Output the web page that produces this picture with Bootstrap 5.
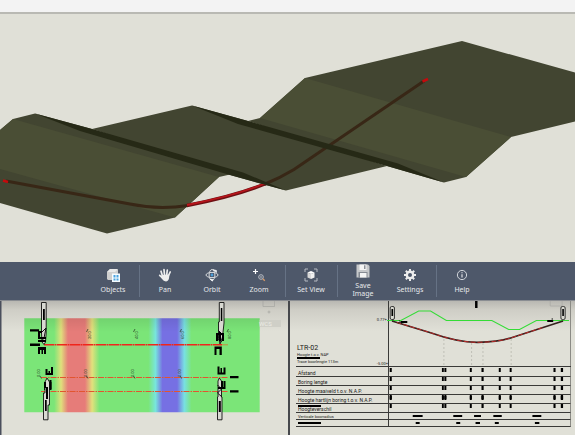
<!DOCTYPE html>
<html lang="nl">
<head>
<meta charset="utf-8">
<meta name="viewport" content="width=device-width, initial-scale=1">
<title>LTR-02 model viewer</title>
<link href="https://cdn.jsdelivr.net/npm/bootstrap@5.3.0/dist/css/bootstrap.min.css" rel="stylesheet">
<style>
  body { background: #e0e0d7; font-family: "Noto Sans", "Open Sans", sans-serif; }
  .title-strip { height: 14px; background: #f3f3f3; border-bottom: 2px solid #b9b9b3; }
  .model-view { min-height: 0; flex: 1 1 0; }
  .model-view svg { width: 100%; height: 100%; }
  .tool-strip { background: #4e586a; height: 39px; border-bottom: 1px solid #8a8d92; }
  .tool-btn { width: 47px; background: none; border: 0; padding: 0; color: #e6e8eb; font-size: 7px; line-height: 8px; gap: 4px; }
  .tool-btn:hover { background: #5c677b; }
  .tool-btn svg { width: 14px; height: 14px; }
  .tool-sep { width: 1px; margin: 3px 2px; background: #667285; }
  .sheets { display: grid; grid-template-columns: 58fr 57fr; }
  .sheet { background: linear-gradient(#b9b8b2, #cfcec6 9px, #e0e0d7 30px); }
  .plan-sheet { border-right: 2px solid #46484c; }
  .plan-sheet svg { width: 100%; }
  .profile-sheet { padding: 0 4px 8px 6px; color: #1a1a18; font-family: Roboto, "Liberation Sans", sans-serif; font-size: 5px; line-height: 5px; }
  .label-side { width: 92px; }
  .profile-head { height: 65px; }
  .profile-notes { padding: 0 0 2px 1px; }
  .profile-title { font-size: 7px; line-height: 8px; }
  .fine-print { font-size: 4px; line-height: 5px; }
  .graph { border-left: 1px solid #3a3a38; border-right: 1px solid #8b8b85; }
  .graph svg, .profile-table svg { width: 100%; height: 100%; overflow: visible; }
  .profile-table { width: 100%; table-layout: fixed; border-collapse: separate; border-spacing: 0; border-top: 1px solid #3a3a38; }
  .profile-table th, .profile-table td { height: 9px; padding: 0; border-bottom: 1px solid #3a3a38; font-weight: 400; vertical-align: bottom; }
  .profile-table th { padding-left: 2px; white-space: nowrap; }
  .profile-table td { border-left: 1px solid #3a3a38; border-right: 1px solid #8b8b85; }
  .profile-table .first-row > * { height: 10px; }
  .profile-table .low-row > * { height: 7px; }
  .cell-art { height: 8px; }
  .low-row .cell-art { height: 6px; }
  .redacted { width: 23px; height: 2px; background: #000; }
</style>
<script src="https://cdn.jsdelivr.net/npm/bootstrap@5.3.0/dist/js/bootstrap.bundle.min.js"></script>
</head>
<body class="d-flex flex-column vh-100 overflow-hidden">

<header class="title-strip flex-shrink-0"></header>

<main class="d-flex flex-column flex-grow-1">
  <section class="model-view" aria-label="3D model">
    <svg class="d-block" viewBox="0 14 575 248" preserveAspectRatio="xMidYMid slice" role="img" aria-label="Terrain with bore path">
      <!-- rear terrain fold -->
      <path fill="#424531" d="M248 121 260 118 305 78 462 41 575 72.500 680 102V96L575 121.500 511 137 466 177 444 182.500 387 166Z"/>
      <path fill="#4a4e35" d="M260 118 305 78 511 137 466 177Z"/>
      <!-- middle fold -->
      <path fill="#424531" d="M92 129 192 105.500 248 121 387 166 286 190.500 230 175Z"/>
      <!-- front fold -->
      <path fill="#424531" d="M-100 212 0 130 13 119 35 113.500 92 129 230 174.500 219 177 175 217.500 107 233.500 0 203Z"/>
      <path fill="#4a4e35" d="M-100 212 0 130 13 119 219 177 175 217.500 0 169Z"/>
      <!-- bore path -->
      <path fill="none" stroke="#382716" stroke-width="3" d="M6 181 130 204Q158 210 188 205.500M264 184.500Q280 178 294 169.500L424 81"/>
      <path fill="none" stroke="#6d1013" stroke-width="3.500" d="M187 205.500Q236 196 266 183.500"/>
      <path fill="none" stroke="#b8151b" stroke-width="1.800" d="M187 205Q236 195.500 266 183"/>
      <!-- shaded ridges -->
      <path fill="#262916" d="M35 113.500 92 129 243 172.500 286 190.500 230 175 80 131Z"/>
      <path fill="#262916" d="M192 105.500 248 121 398 163.500 444 182.500 387 166 238 124Z"/>
      <path stroke="#c40a0d" stroke-width="2.500" d="M3 180.500 8 182M422.500 81.500 428 79"/>
    </svg>
  </section>

  <nav class="tool-strip d-flex justify-content-center flex-shrink-0" aria-label="Viewer tools">
    <button type="button" class="tool-btn d-flex flex-column align-items-center justify-content-center">
      <svg viewBox="0 0 14 14"><path fill="#cfcfcf" d="M1 4 4 1H11L12 2V5L9 12H2L1 11Z"/><path fill="#e9e9e9" d="M1 4 4 1H12L9 4Z"/><path fill="#f5fbff" d="M6 5.500H14V14H6Z"/><path fill="#4aa3e0" d="M7.500 7H9.500V9.500H7.500ZM10.500 7H12.500V9.500H10.500ZM7.500 10.500H9.500V12.500H7.500ZM10.500 10.500H12.500V12.500H10.500Z"/></svg>
      <span>Objects</span>
    </button>
    <div class="tool-sep"></div>
    <button type="button" class="tool-btn d-flex flex-column align-items-center justify-content-center">
      <svg viewBox="0 0 14 14" fill="none" stroke="#ededed" stroke-width="1.700" stroke-linecap="round"><path d="M4.500 8 3 3.200M6.500 7 6 1.700M8.700 7 9.300 2M10.300 8 12.200 4M4.500 10 1.700 7.300"/><path fill="#ededed" stroke="none" d="M3.700 7 11.200 6.500C11.500 9.500 10.800 13.500 8 13.500 5.500 13.500 4.500 11.500 3.200 9.800Z"/></svg>
      <span>Pan</span>
    </button>
    <button type="button" class="tool-btn d-flex flex-column align-items-center justify-content-center">
      <svg viewBox="0 0 14 14" fill="none" stroke="#d5d8dc" stroke-width="1"><ellipse cx="7" cy="7" rx="6" ry="2.600"/><ellipse cx="7" cy="7" rx="2.900" ry="5.500"/><path fill="#fff" stroke="#fff" stroke-width=".5" d="M8 1.500 11.500 4.500 11.500 2.500ZM5 11 7.500 13.200 8 11.500Z"/><circle cx="7" cy="7" r="1.400" fill="#4b9dd8" stroke="none"/></svg>
      <span>Orbit</span>
    </button>
    <button type="button" class="tool-btn d-flex flex-column align-items-center justify-content-center">
      <svg viewBox="0 0 14 14" fill="none"><path stroke="#fff" stroke-width="1.200" d="M3.500 1V6M1 3.500H6"/><circle cx="9" cy="9" r="2.300" stroke="#b9bdc4"/><path stroke="#b9bdc4" d="M8 9H10"/><path stroke="#d59a68" stroke-width="1.300" d="M10.800 10.800 12.800 12.800"/></svg>
      <span>Zoom</span>
    </button>
    <div class="tool-sep"></div>
    <button type="button" class="tool-btn d-flex flex-column align-items-center justify-content-center">
      <svg viewBox="0 0 14 14"><path fill="none" stroke="#b5bac2" d="M1 4V1H4M10 1H13V4M13 10V13H10M4 13H1V10"/><path fill="#fff" d="M3.500 4.500 7 3 10.500 4.500 7 6Z"/><path fill="#d8d8d8" d="M3.500 4.500 7 6V11L3.500 9.500Z"/><path fill="#f0f0f0" d="M10.500 4.500 7 6V11L10.500 9.500Z"/></svg>
      <span>Set View</span>
    </button>
    <div class="tool-sep"></div>
    <button type="button" class="tool-btn d-flex flex-column align-items-center justify-content-center">
      <svg viewBox="0 0 14 14"><path fill="#c6c8ca" d="M.5.500H12L13.500 2V13.500H.500Z"/><path fill="#f4f4f4" d="M3.500.500H10.500V6H3.500Z"/><path fill="#8c9097" d="M8 1.200H9.500V5H8Z"/><path fill="#858a92" d="M2.500 8H11.500V13.500H2.500Z"/><path fill="#f4f4f4" d="M4 9H10.500V13.500H4Z"/></svg>
      <span>Save<br>Image</span>
    </button>
    <button type="button" class="tool-btn d-flex flex-column align-items-center justify-content-center">
      <svg viewBox="0 0 14 14" fill="none" stroke="#ededed"><circle cx="7" cy="7" r="3.200" stroke-width="2.400"/><path stroke-width="2" d="M7 1V3.500M7 10.500V13M1 7H3.500M10.500 7H13M2.800 2.800 4.500 4.500M9.500 9.500 11.200 11.200M2.800 11.200 4.500 9.500M9.500 4.500 11.200 2.800"/></svg>
      <span>Settings</span>
    </button>
    <div class="tool-sep"></div>
    <button type="button" class="tool-btn d-flex flex-column align-items-center justify-content-center">
      <svg viewBox="0 0 14 14" fill="none" stroke="#dfe2e6"><circle cx="7" cy="7" r="4.600" stroke-width=".9"/><path stroke-width="1.200" d="M7 6.200V9.600M7 4.200V5.300"/></svg>
      <span>Help</span>
    </button>
  </nav>

  <div class="sheets flex-shrink-0">
    <section class="sheet plan-sheet" aria-label="Plan view">
      <svg class="d-block" viewBox="0 301 288 134" role="img" aria-label="Plan of bore path">
        <defs>
          <linearGradient id="terrain" gradientUnits="userSpaceOnUse" x1="0" y1="0" x2="288" y2="0">
            <stop offset=".188" stop-color="#7be578"/><stop offset=".212" stop-color="#dfe07c"/><stop offset=".236" stop-color="#e67c79"/>
            <stop offset=".295" stop-color="#e67c79"/><stop offset=".32" stop-color="#e2e07c"/><stop offset=".345" stop-color="#7be578"/>
            <stop offset=".515" stop-color="#7be578"/><stop offset=".54" stop-color="#78e5dc"/><stop offset=".564" stop-color="#7670e3"/>
            <stop offset=".615" stop-color="#7670e3"/><stop offset=".64" stop-color="#78e0e2"/><stop offset=".665" stop-color="#7be578"/>
          </linearGradient>
          <linearGradient id="strip-shade" x1="0" y1="0" x2="0" y2="1"><stop offset="0" stop-opacity=".08"/><stop offset="1" stop-opacity="0"/></linearGradient>
        </defs>
        <path fill="#4a4f5c" d="M0 301H1.500V435H0Z"/>
        <path fill="url(#terrain)" d="M24.300 318.300H259.700V412.300H24.300Z"/>
        <path fill="url(#strip-shade)" d="M24.300 318.300H259.700V332H24.300Z"/>
        <!-- view cube -->
        <g fill="none" stroke="#a5a5a0" stroke-width=".7"><path d="M263 301V306.500H274.500V301"/><circle cx="269" cy="312" r="1"/></g>
        <path fill="#cfcfc7" d="M259.700 320H281V327H259.700Z"/>
        <text x="259" y="325.500" font-size="6" fill="#ecece6" font-family="Roboto, sans-serif">WCS</text>
        <!-- bore lines -->
        <g stroke="#f0251c" fill="none">
          <path stroke-width="1.600" stroke-dasharray="10 .5 2 .5" d="M44 344.800H222"/>
          <path stroke-width=".8" stroke="#d9762f" d="M222 344.800H228"/>
          <path stroke-width="1" stroke="#e2552f" stroke-dasharray="6 1 1.500 1" d="M41 377.500H228M41 391.500H228"/>
        </g>
        <!-- chainage labels -->
        <g font-family="Roboto, sans-serif" font-size="4" fill="#2c4a2b">
          <text transform="translate(91 339) rotate(-90)">20.0</text><text transform="translate(138 339) rotate(-90)">40.0</text>
          <text transform="translate(184 339) rotate(-90)">60.0</text><text transform="translate(231 339) rotate(-90)">80.0</text>
          <text transform="translate(40 377) rotate(-90)">0.00</text><text transform="translate(87 377) rotate(-90)">0.00</text>
          <text transform="translate(134 377) rotate(-90)">0.00</text><text transform="translate(181 377) rotate(-90)">0.00</text>
        </g>
        <path stroke="#22321f" stroke-width=".7" d="M88 329 86.500 332M135 329 133.500 332M181.500 329 180 332M228.500 329 227 332M40 376 41.500 378.500M86.500 376 88 378.500M133.500 376 135 378.500M180 376 181.500 378.500"/>
        <!-- entry and exit markers -->
        <g fill="#d9d9d2" stroke="#111" stroke-width=".9">
          <path d="M41.500 302.500H46.200V333L45.500 342 44 344.500 42 342 41.500 333Z"/>
          <path d="M219.300 302.500H224V323L222.500 337 220 344 218.500 337V322H219.300Z"/>
          <path d="M47 378 49.500 382V405H48V419.800H43.500V393H45V382Z"/>
          <path d="M219.300 378 221.500 381V397H222V419.800H217.500V397H218V381Z"/>
        </g>
        <path fill="#000" d="M43 309H44.800V320H43ZM220.800 308H222.300V321H220.800ZM46 387H48V399H46ZM45 400H46.700V411H45ZM218.800 401H220.800V412H218.800Z"/>
        <path fill="none" stroke="#111" d="M41 333 46 328 44 338 41 342M218 330 222 334 217.500 339 222 342M44.500 382V390M51 382V389M217.500 385 221.500 389 217.500 393 222 397"/>
        <g fill="#000">
          <path d="M30 329.300H39V331.500H30ZM30 343.500H40V346H30ZM38 332H40V339H38ZM40 337H46V339H40ZM38 340H46V342H38ZM38 347H46V350H38ZM38 349H40V354H38ZM41.500 349H43V354H41.500ZM44 349H46V354H44ZM38 331H42V333H38Z"/>
          <path d="M45.500 369H47.500V375H45.500ZM48.500 371H50V375H48.500ZM51 367H53V375H51ZM45.500 373H53V375H45.500ZM44 382H46V388H44ZM49.500 380H51.500V390H49.500Z"/>
          <path d="M216 333H218V341H216ZM219 332H221V341H219ZM222 333H224V341H222ZM216 333H223V335H216ZM214.500 346.500H221.500V349H214.500ZM214.500 346.500H216.500V355H214.500ZM219.500 346.500H221.800V355H219.500Z"/>
          <path d="M217.500 366.500H219.500V374H217.500ZM220.500 368H222V374H220.500ZM223.500 367.500H225.500V374H223.500ZM217.500 372.500H225.500V374.500H217.500ZM221 381H223V389H221ZM223.500 381H225.500V388H223.500ZM218 387H225.500V389H218ZM230 376H238.500V378.300H230ZM230 390.200H238.500V392.500H230Z"/>
        </g>
      </svg>
    </section>

    <section class="sheet profile-sheet" aria-label="Profile LTR-02">
      <div class="profile-head d-flex">
        <div class="label-side d-flex flex-shrink-0 justify-content-between">
          <div class="profile-notes d-flex flex-column justify-content-end text-nowrap">
            <div class="profile-title">LTR-02</div>
            <div class="fine-print">Hoogte t.o.v. NAP</div>
            <div class="redacted"></div>
            <div class="fine-print">Trace boorlengte 113m</div>
          </div>
          <div class="fine-print d-flex flex-column justify-content-between pt-3"><span>0.77+</span><span>-5.00+</span></div>
        </div>
        <div class="graph flex-grow-1">
          <svg class="d-block" viewBox="0 0 183 65" preserveAspectRatio="none" role="img" aria-label="Ground level and bore line">
            <g stroke="#b7b7ae" stroke-width=".8" stroke-dasharray="2 2"><path d="M55.500 38V65M83.500 42V65M95 42V65M123.500 38V65"/></g>
            <path fill="none" stroke="#a9a9a4" stroke-width=".7" d="M163 0V5H175V0"/>
            <path fill="none" stroke="#34dc36" stroke-width="1.100" d="M-2 19.500H12L30 10H42L58 19.500H104L121 28.500H132L149 19.500H182"/>
            <path fill="none" stroke="#33201e" stroke-width="1.700" d="M3 20 42 31.700Q70 41.500 90 41.300T123 37L176 20"/>
            <path fill="none" stroke="#c02a28" stroke-width="1" stroke-dasharray="5 2" d="M8 21.500 42 31.700Q70 41.500 90 41.300T123 37L155 26.700"/>
            <g fill="#d8d8d0" stroke="#222" stroke-width=".9"><rect x="1.200" y="5.500" width="4.300" height="13" rx="1.500"/><rect x="173.800" y="5.500" width="4.300" height="13" rx="1.500"/></g>
            <path fill="#000" d="M2.500 8H4.200V15H2.500ZM175.200 8H176.800V15H175.200ZM12 20H18.500V22H12ZM160 19H166V21H160ZM87 0H89.500V7H87Z"/>
            <path stroke="#222" stroke-width=".8" d="M10 19 13 23M9 22 12 21M165 17V20"/>
          </svg>
        </div>
      </div>
      <table class="profile-table">
        <colgroup><col class="label-side"><col></colgroup>
        <tbody>
          <tr class="first-row"><th scope="row">Afstand</th><td><div class="cell-art"><svg class="d-block" viewBox="0 0 183 8" preserveAspectRatio="none" aria-hidden="true"><path id="ticks" d="M.7 0H2.800V4H.700ZM53.500 0H55.400V4H53.500ZM56 0H58V4H56ZM81.700 0H83.700V4H81.700ZM93.500 0H95.700V4H93.500ZM111 0H113V4H111ZM122 0H124V4H122ZM166.300 0H168.400V4H166.300ZM173.700 0H176V4H173.700Z"/></svg></div></td></tr>
          <tr><th scope="row">Boring lengte</th><td><div class="cell-art"><svg class="d-block" viewBox="0 0 183 8" preserveAspectRatio="none" aria-hidden="true"><use href="#ticks"/></svg></div></td></tr>
          <tr><th scope="row">Hoogte maaiveld t.o.v. N.A.P.</th><td><div class="cell-art"><svg class="d-block" viewBox="0 0 183 8" preserveAspectRatio="none" aria-hidden="true"><use href="#ticks"/></svg></div></td></tr>
          <tr><th scope="row">Hoogte hartlijn boring t.o.v. N.A.P.</th><td><div class="cell-art"><svg class="d-block" viewBox="0 0 183 8" preserveAspectRatio="none" aria-hidden="true"><use href="#ticks"/><use href="#ticks" y="1"/></svg></div></td></tr>
          <tr><th scope="row"><div class="redacted"></div>Hoogteverschil</th><td><div class="cell-art"><svg class="d-block" viewBox="0 0 183 8" preserveAspectRatio="none" aria-hidden="true"><use href="#ticks"/></svg></div></td></tr>
          <tr class="low-row"><th scope="row" class="fine-print">Verticale boorradius</th><td><div class="cell-art"><svg class="d-block" viewBox="0 0 183 6" preserveAspectRatio="none" aria-hidden="true"><path d="M24 2H34V4H24ZM65 2H74V4H65ZM86 2H93V4H86ZM105.500 2H114V4H105.500ZM145 2H154V4H145Z"/></svg></div></td></tr>
          <tr class="low-row"><th scope="row" class="align-middle" aria-label="Afgeschermd"><div class="redacted"></div></th><td><div class="cell-art"><svg class="d-block" viewBox="0 0 183 6" preserveAspectRatio="none" aria-hidden="true"><path d="M27 2H31V4H27ZM68 2H72V4H68ZM87.500 2H92V4H87.500ZM107 2H111V4H107ZM147.500 2H152V4H147.500Z"/></svg></div></td></tr>
        </tbody>
      </table>
    </section>
  </div>
</main>
</body>
</html>
